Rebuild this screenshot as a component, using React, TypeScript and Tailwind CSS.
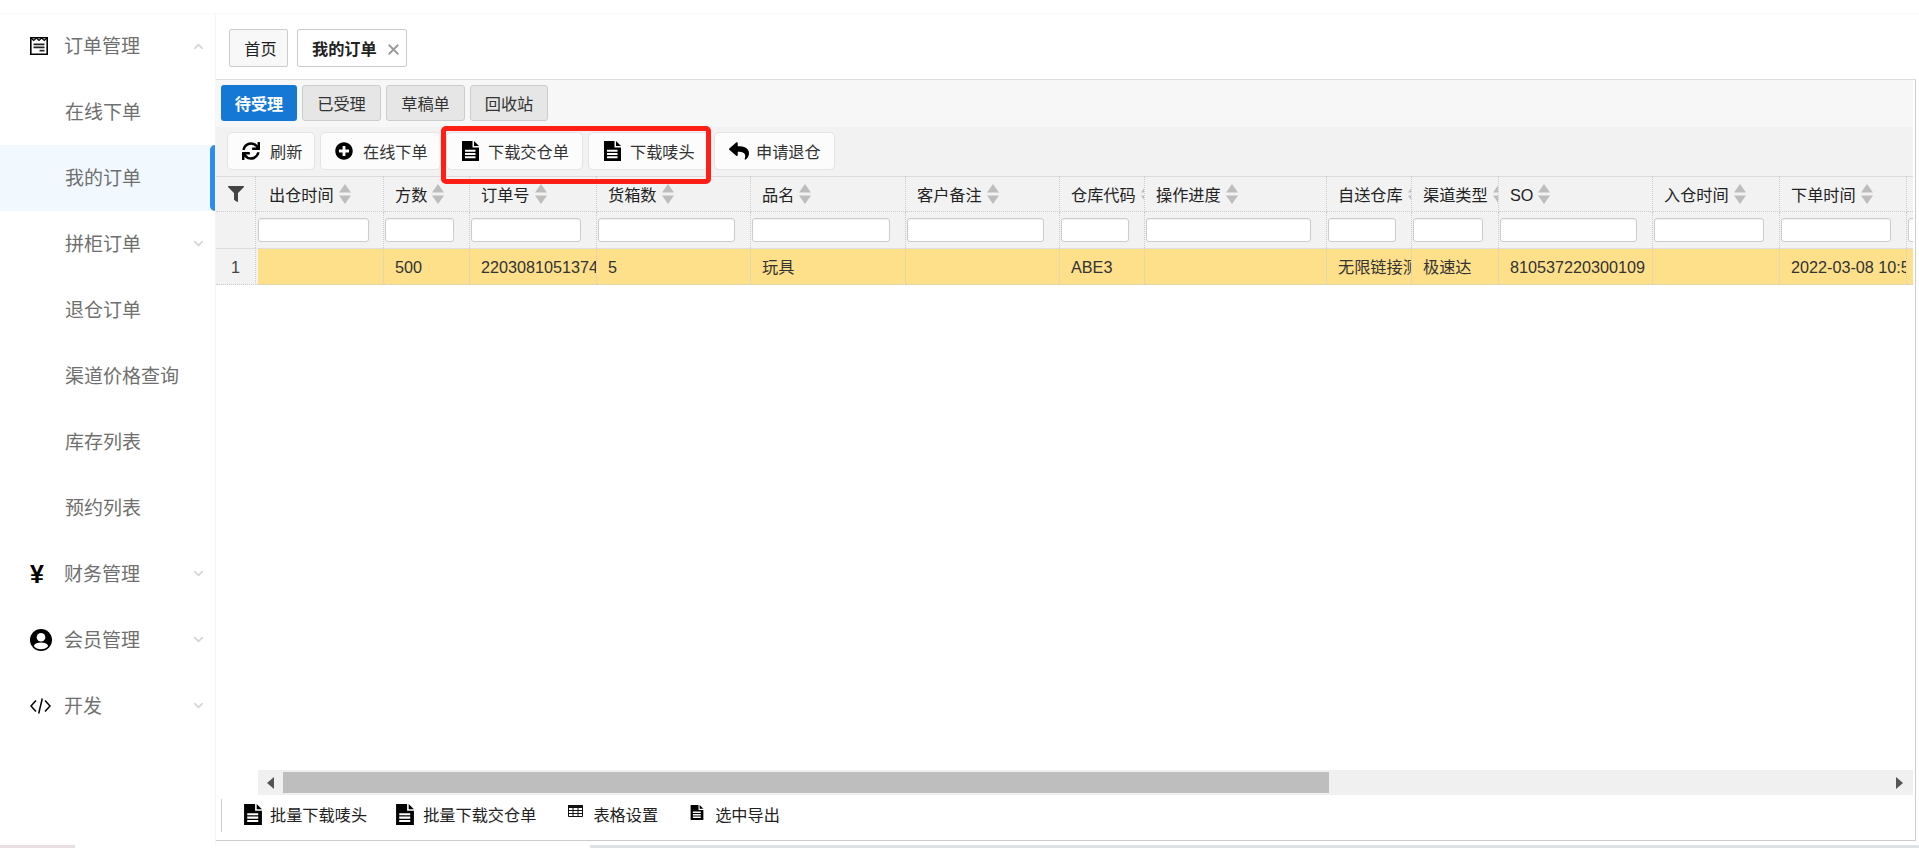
import React from 'react';
import { ChevronDown, ChevronUp, X } from 'lucide-react';
import { FaSync, FaPlusCircle, FaReply, FaFilter } from 'react-icons/fa';

const cols: { t: string; w: number; v?: string }[] = [
  { t: '出仓时间', w: 128 },
  { t: '方数', w: 86, v: '500' },
  { t: '订单号', w: 127, v: '2203081051374' },
  { t: '货箱数', w: 154, v: '5' },
  { t: '品名', w: 155, v: '玩具' },
  { t: '客户备注', w: 154 },
  { t: '仓库代码', w: 85, v: 'ABE3' },
  { t: '操作进度', w: 182 },
  { t: '自送仓库', w: 85, v: '无限链接测试' },
  { t: '渠道类型', w: 87, v: '极速达' },
  { t: 'SO', w: 154, v: '810537220300109' },
  { t: '入仓时间', w: 127 },
  { t: '下单时间', w: 127, v: '2022-03-08 10:52:11' },
  { t: '', w: 60 },
];

const Doc = ({ className }: { className: string }) => (
  <svg viewBox="0 0 17 20" className={className} aria-hidden="true">
    <path d="M0 0h10.500v6.500H17V20H0z" fill="#000" />
    <path d="M12 0l5 5h-5z" fill="#000" />
    <path d="M3 8.800h10.500v2H3zM3 12h10.500v2H3zM3 15.200h10.500v2H3z" fill="#fff" />
  </svg>
);

const TableIcon = () => (
  <svg viewBox="0 0 15 12" className="w-[15px] h-[12px] -mt-[8px]" aria-hidden="true">
    <path d="M.5.5h14v11H.5z" fill="#fff" stroke="#111" />
    <path d="M0 0h15v3H0z" fill="#111" />
    <path d="M5 3v8M10 3v8M1 5.500h13M1 8.500h13" stroke="#111" fill="none" />
  </svg>
);

const OrderIcon = () => (
  <svg viewBox="0 0 18 18" className="w-[18px] h-[18px]" aria-hidden="true">
    <path d="M.8.8h16.400v16.400H.8z" fill="#fff" stroke="#000" strokeWidth="1.600" />
    <path d="M1 1l2.700 2.400L6.400 1l2.600 2.400L11.600 1l2.700 2.400L17 1" fill="none" stroke="#000" strokeWidth="1.100" />
    <path d="M3.500 6.500h11v1.700h-11zM3.500 9.600h11v1.700h-11z" fill="#222" />
    <path d="M9.500 12.800h5v1.700h-5z" fill="#222" />
  </svg>
);

const UserIcon = () => (
  <svg viewBox="0 0 22 22" className="w-[22px] h-[22px]" aria-hidden="true">
    <circle cx="11" cy="11" r="11" fill="#000" />
    <circle cx="11" cy="8.300" r="4.300" fill="#fff" />
    <path d="M3.800 17c1-2.600 3.800-3.500 7.200-3.500s6.200.9 7.200 3.500c-1.700 2.100-4.200 3.200-7.200 3.200s-5.500-1.100-7.200-3.200z" fill="#fff" />
  </svg>
);

const CodeIcon = () => (
  <svg viewBox="0 0 21 18" className="w-[21px] h-[18px]" aria-hidden="true">
    <path d="M6 3.500L1 9l5 5.500M15 3.500L20 9l-5 5.500M12.300 1.500L8.700 16.500" fill="none" stroke="#000" strokeWidth="1.500" />
  </svg>
);

const SortIcon = () => (
  <svg viewBox="0 0 12 20" className="w-[12px] h-[20px] shrink-0" aria-hidden="true">
    <path d="M6 0l6 8.500H0zM0 11.500h12L6 20z" fill="#bdbdbd" />
  </svg>
);

const menu: { t: string; sub?: boolean; icon?: React.ReactNode; chev?: 'up' | 'down'; active?: boolean }[] = [
  { t: '订单管理', icon: <OrderIcon />, chev: 'up' },
  { t: '在线下单', sub: true },
  { t: '我的订单', sub: true, active: true },
  { t: '拼柜订单', sub: true, chev: 'down' },
  { t: '退仓订单', sub: true },
  { t: '渠道价格查询', sub: true },
  { t: '库存列表', sub: true },
  { t: '预约列表', sub: true },
  { t: '财务管理', icon: <span className="text-[25px] font-bold text-black leading-none">¥</span>, chev: 'down' },
  { t: '会员管理', icon: <UserIcon />, chev: 'down' },
  { t: '开发', icon: <CodeIcon />, chev: 'down' },
];

const Btn = ({ icon, t, cls }: { icon: React.ReactNode; t: string; cls: string }) => (
  <button className={`h-[38px] flex items-center border border-[#e4e4e4] rounded-[5px] bg-[#fcfcfc] text-[16.2px] text-[#333] whitespace-nowrap ${cls}`}>
    {icon}
    <span className="pt-[2px]">{t}</span>
  </button>
);

export default function App() {
  return (
    <div className="w-[1919px] h-[848px] overflow-hidden flex flex-col bg-white [font-family:'Liberation_Sans','Noto_Sans_CJK_SC',sans-serif]">
      <div className="h-[13px] shrink-0 bg-white shadow-[0_1px_2px_rgba(0,0,0,0.03)]" />
      <div className="flex-1 flex min-h-0">
        <aside className="w-[216px] shrink-0 border-r border-[#f6f6f6] text-[19px] text-[#6f6f6f]">
          {menu.map((m) => (
            <div key={m.t} className={`relative h-[66px] flex items-center ${m.active ? 'bg-[#f1f9ff]' : ''}`}>
              {m.sub ? (
                <span className="ml-[65px] pt-[3px]">{m.t}</span>
              ) : (
                <>
                  <span className="ml-[30px] w-[34px] flex items-center">{m.icon}</span>
                  <span className="pt-[3px]">{m.t}</span>
                </>
              )}
              {m.chev === 'up' && <ChevronUp className="absolute left-[191px] top-[26px] text-[#d4d4d4]" size={15} strokeWidth={2.5} />}
              {m.chev === 'down' && <ChevronDown className="absolute left-[191px] top-[25px] text-[#d4d4d4]" size={15} strokeWidth={2.5} />}
              {m.active && <span className="absolute right-0 top-0 bottom-0 w-[5px] rounded-l-[5px] bg-[#2d8cf0]" />}
            </div>
          ))}
        </aside>
        <main className="flex-1 min-w-0 flex flex-col">
          <div className="h-[66px] shrink-0 pt-[16px] pl-[13px] flex gap-[9px] items-start text-[16.2px] text-[#222]">
            <div className="w-[59px] h-[38px] border border-[#ccc] rounded-[2px] bg-[#f8f8f8] flex items-center justify-center pl-[4px] pt-[2px]">首页</div>
            <div className="w-[110px] h-[38px] border border-[#ccc] rounded-[2px] bg-white flex items-center pl-[14px]">
              <span className="font-bold pt-[2px]">我的订单</span>
              <X className="ml-[8px] text-[#999] mt-[2px]" size={17} strokeWidth={2.5} />
            </div>
          </div>
          <div className="relative flex-1 min-h-0 mr-[3px] mb-[4px] border-t border-r border-b border-[#ccc] border-t-[#ddd] flex flex-col">
            <div className="h-[47px] shrink-0 bg-[#f7f7f7] pt-[5px] pl-[5px] mr-[2px] flex gap-[5px] items-start text-[16.2px] text-[#333]">
              <div className="w-[76px] h-[36px] rounded-[3px] bg-[#1478d4] text-white font-bold flex items-center justify-center pt-[2px]">待受理</div>
              <div className="w-[79px] h-[36px] rounded-[3px] border border-[#ccc] bg-[#e6e6e6] flex items-center justify-center pt-[2px]">已受理</div>
              <div className="w-[79px] h-[36px] rounded-[3px] border border-[#ccc] bg-[#e6e6e6] flex items-center justify-center pt-[2px]">草稿单</div>
              <div className="w-[78px] h-[36px] rounded-[3px] border border-[#ccc] bg-[#e6e6e6] flex items-center justify-center pt-[2px]">回收站</div>
            </div>
            <div className="h-[49px] shrink-0 bg-[#f2f2f2] mr-[2px] pl-[11px] pt-[5px] flex gap-[5px] items-start">
              <Btn cls="w-[88px] pl-[14px]" icon={<FaSync className="mr-[10px] text-black -mt-[1px]" size={18} />} t="刷新" />
              <Btn cls="w-[121px] pl-[14px]" icon={<FaPlusCircle className="mr-[10px] text-black -mt-[1px]" size={18} />} t="在线下单" />
              <Btn cls="w-[137px] pl-[15px]" icon={<Doc className="w-[17px] h-[20px] mr-[9px] -mt-[1px]" />} t="下载交仓单" />
              <Btn cls="w-[121px] pl-[15px]" icon={<Doc className="w-[17px] h-[20px] mr-[9px] -mt-[1px]" />} t="下载唛头" />
              <Btn cls="w-[121px] pl-[14px]" icon={<FaReply className="mr-[7px] text-black -mt-[1px]" size={20} />} t="申请退仓" />
            </div>
            <div className="absolute left-[225px] top-[46px] w-[270px] h-[58px] border-[5px] border-[#ff1f14] rounded-[5px] pointer-events-none" />
            <div className="flex-1 min-h-0 overflow-hidden mr-[2px]">
              <table className="table-fixed border-separate border-spacing-0 w-[1751px] text-[16.2px] text-[#333]">
                <colgroup>
                  <col className="w-[40px]" />
                  {cols.map((c, i) => (
                    <col key={i} style={{ width: c.w }} />
                  ))}
                </colgroup>
                <thead>
                  <tr className="bg-[#f2f2f2]">
                    <th className="h-[36px] border-t border-[#ddd] border-r border-r-[#ccc] border-b border-b-[#ccc] [border-right-style:dotted] [border-bottom-style:dotted] font-normal">
                      <FaFilter className="mx-auto text-[#444]" size={16} />
                    </th>
                    {cols.map((c, i) => (
                      <th key={i} className={`h-[36px] border-t border-[#ddd] border-r border-r-[#ccc] border-b border-b-[#ccc] [border-right-style:dotted] [border-bottom-style:dotted] font-normal p-0 overflow-hidden ${i === 0 ? 'pl-[13px]' : 'pl-[11px]'}`}>
                        {c.t && (
                          <div className="flex items-center gap-[5px] whitespace-nowrap text-[#222]">
                            <span className="pt-[2px]">{c.t}</span>
                            <SortIcon />
                          </div>
                        )}
                      </th>
                    ))}
                  </tr>
                  <tr className="bg-[#f2f2f2]">
                    <th className="h-[36px] border-r border-r-[#ccc] [border-right-style:dotted] font-normal" />
                    {cols.map((c, i) => (
                      <th key={i} className={`h-[36px] border-r border-r-[#ccc] [border-right-style:dotted] p-0 overflow-hidden text-left ${i === 0 ? 'pl-[2px]' : 'pl-[1px]'}`}>
                        <input
                          readOnly
                          style={{ width: c.w - 17 }}
                          className="block h-[24px] bg-white border border-[#ccc] rounded-[3px] shadow-[inset_0_1px_1px_rgba(0,0,0,0.06)]"
                        />
                      </th>
                    ))}
                  </tr>
                </thead>
                <tbody>
                  <tr>
                    <td className="h-[37px] bg-[#f2f2f2] text-center text-[#444] border-t border-t-[#ddd] border-r border-r-[#ccc] border-b border-b-[#ccc] [border-right-style:dotted] [border-bottom-style:dotted] pt-[2px]">1</td>
                    {cols.map((c, i) => (
                      <td key={i} className={`h-[37px] bg-[#fee08b] border-t border-t-[#ddd] border-r border-r-[#ccc] border-b border-b-[#ccc] [border-right-style:dotted] [border-bottom-style:dotted] p-0 pt-[2px] pl-[11px] overflow-hidden whitespace-nowrap ${i === 0 ? 'border-l-2 border-l-[#f2f2f2]' : ''}`}>
                        {c.v}
                      </td>
                    ))}
                  </tr>
                </tbody>
              </table>
            </div>
            <div className="h-[25px] shrink-0 ml-[42px] mr-[2px] bg-[#f0f0f0] flex items-center">
              <div className="w-[25px] flex justify-center">
                <svg viewBox="0 0 7 12" className="w-[7px] h-[12px]" aria-hidden="true"><path d="M7 0v12L0 6z" fill="#555" /></svg>
              </div>
              <div className="w-[1046px] h-[21px] bg-[#bebebe]" />
              <div className="flex-1 flex justify-end pr-[10px]">
                <svg viewBox="0 0 7 12" className="w-[7px] h-[12px]" aria-hidden="true"><path d="M0 0v12l7-6z" fill="#555" /></svg>
              </div>
            </div>
            <div className="h-[45px] shrink-0 pb-[5px] flex items-center text-[16.2px] text-[#222] whitespace-nowrap">
              <div className="w-px h-[33px] bg-[#ccc] ml-[5px] mr-[22px]" />
              <Doc className="w-[18px] h-[21px] mr-[8px] -mt-[2px]" />
              <span>批量下载唛头</span>
              <Doc className="w-[18px] h-[21px] ml-[29px] mr-[9px] -mt-[2px]" />
              <span>批量下载交仓单</span>
              <span className="ml-[32px] mr-[10px] flex"><TableIcon /></span>
              <span>表格设置</span>
              <Doc className="w-[14px] h-[15px] ml-[32px] mr-[11px] -mt-[6px]" />
              <span>选中导出</span>
            </div>
          </div>
        </main>
      </div>
      <div className="h-[3px] shrink-0 flex">
        <div className="w-[75px] bg-[#eadfe0]" />
        <div className="w-[515px] bg-white" />
        <div className="flex-1 bg-[#dfe2e4]" />
      </div>
    </div>
  );
}
